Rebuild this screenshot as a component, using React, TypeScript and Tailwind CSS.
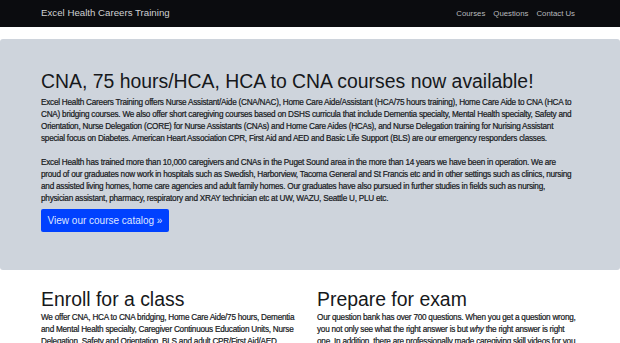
import React from 'react';

const NavBar: React.FC = () => {
    return (
        <nav className="flex h-[27px] items-center justify-between bg-[#0b0c0f] pl-[41px] pr-[45px]">
            <a className="text-[9.7px] text-[#cfd0d2]">Excel Health Careers Training</a>
            <div className="flex gap-[8px] text-[7.8px] text-[#b8babd]">
                <a>Courses</a>
                <a>Questions</a>
                <a>Contact Us</a>
            </div>
        </nav>
    );
};

const App: React.FC = () => {
    return (
        <div className="min-h-screen overflow-hidden bg-white font-['Liberation_Sans',Arial,sans-serif] text-[#16181b]">
            <NavBar />
            <main>
                <section className="mt-[12px] rounded-[3px] bg-[#ced4dc] px-[41px] pt-[31px] pb-[38px]">
                    <h1 className="text-[19.4px] leading-[23px]">CNA, 75 hours/HCA, HCA to CNA courses now available!</h1>
                    <div className="mt-[4px] text-[8.2px] leading-[12px] tracking-[-0.24px] [-webkit-text-stroke:0.2px_#16181b]">
                        <p className="w-[537px]">
                            Excel Health Careers Training offers Nurse Assistant/Aide (CNA/NAC), Home Care Aide/Assistant (HCA/75 hours training), Home Care Aide to CNA (HCA to CNA) bridging courses. We also offer short caregiving courses based on DSHS curricula that include Dementia specialty, Mental Health specialty, Safety and Orientation, Nurse Delegation (CORE) for Nurse Assistants (CNAs) and Home Care Aides (HCAs), and Nurse Delegation training for Nurising Assistant special focus on Diabetes. American Heart Association CPR, First Aid and AED and Basic Life Support (BLS) are our emergency responders classes.
                        </p>
                        <p className="mt-[12px] w-[536px]">
                            Excel Health has trained more than 10,000 caregivers and CNAs in the Puget Sound area in the more than 14 years we have been in operation. We are proud of our graduates now work in hospitals such as Swedish, Harborview, Tacoma General and St Francis etc and in other settings such as clinics, nursing and assisted living homes, home care agencies and adult family homes. Our graduates have also pursued in further studies in fields such as nursing, physician assistant, pharmacy, respiratory and XRAY technician etc at UW, WAZU, Seattle U, PLU etc.
                        </p>
                    </div>
                    <a className="mt-[4px] inline-flex h-[23px] w-[128px] items-center justify-center rounded-[2px] bg-[#0041ff] text-[10px] text-[#dfe6ff]">
                        View our course catalog »
                    </a>
                </section>

                <section className="grid w-[579px] grid-cols-2 gap-[14px] pl-[41px] pt-[18px]">
                    <div>
                        <h2 className="text-[19.4px] leading-[23px]">Enroll for a class</h2>
                        <p className="mt-[1px] text-[8.2px] leading-[12px] tracking-[-0.24px] [-webkit-text-stroke:0.2px_#16181b]">
                            We offer CNA, HCA to CNA bridging, Home Care Aide/75 hours, Dementia and Mental Health specialty, Caregiver Continuous Education Units, Nurse Delegation, Safety and Orientation, BLS and adult CPR/First Aid/AED classes. Register online today.
                        </p>
                    </div>
                    <div>
                        <h2 className="text-[19.4px] leading-[23px]">Prepare for exam</h2>
                        <p className="mt-[1px] text-[8.2px] leading-[12px] tracking-[-0.24px] [-webkit-text-stroke:0.2px_#16181b]">
                            Our question bank has over 700 questions. When you get a question wrong, you not only see what the right answer is but <em>why</em> the right answer is right one. In addition, there are professionally made caregiving skill videos for you to practice.
                        </p>
                    </div>
                </section>
            </main>
        </div>
    );
};

export default App;
